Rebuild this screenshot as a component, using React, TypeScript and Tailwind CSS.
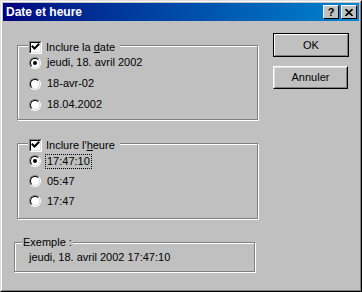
import React from 'react';

const raised =
  'border border-t-white border-l-white border-b-black border-r-black';

function Radio({ checked }: { checked?: boolean }) {
  return (
    <span className="w-[12px] h-[12px] shrink-0 rounded-full border border-t-[#808080] border-l-[#808080] border-b-white border-r-white">
      <span className="flex items-center justify-center w-full h-full rounded-full bg-white border border-t-black border-l-black border-b-[#dfdfdf] border-r-[#dfdfdf]">
        {checked && <span className="w-[4px] h-[4px] rounded-full bg-black" />}
      </span>
    </span>
  );
}

function Checkbox() {
  return (
    <span className="w-[13px] h-[13px] shrink-0 border border-t-[#808080] border-l-[#808080] border-b-white border-r-white">
      <span className="flex w-full h-full bg-white border border-t-black border-l-black border-b-[#dfdfdf] border-r-[#dfdfdf]">
        <svg width="9" height="9" viewBox="0 0 9 9">
          <polyline points="1.5,3.5 3.5,5.5 7.5,1.5" fill="none" stroke="black" strokeWidth="2" strokeLinecap="square" />
        </svg>
      </span>
    </span>
  );
}

function Row({ label, checked, focus, h }: { label: string; checked?: boolean; focus?: boolean; h: string }) {
  return (
    <div className={`flex items-center pl-[11px] ${h}`}>
      <Radio checked={checked} />
      <span className={`ml-[5px] px-[1px] leading-[13px] ${focus ? 'outline outline-1 outline-dotted outline-black' : ''}`}>
        {label}
      </span>
    </div>
  );
}

export default function App() {
  return (
    <div className="w-[362px] h-[292px] bg-[#c0c0c0] border border-t-[#dfdfdf] border-l-[#dfdfdf] border-b-black border-r-black font-['Liberation_Sans',Arial,sans-serif] text-[11px] text-black">
      <div className="w-full h-full p-[1px] border border-t-white border-l-white border-b-[#808080] border-r-[#808080] flex flex-col">
        {/* barre de titre */}
        <div className="h-[18px] shrink-0 flex items-center justify-between pl-[3px] pr-[2px] bg-gradient-to-r from-[#000080] to-[#1084d0]">
          <span className="text-white font-bold text-[12px] leading-none">Date et heure</span>
          <div className="flex gap-[2px]">
            <div className={`w-[16px] h-[14px] bg-[#c0c0c0] ${raised} flex items-center justify-center`}>
              <span className="font-bold text-[11px] leading-none">?</span>
            </div>
            <div className={`w-[16px] h-[14px] bg-[#c0c0c0] ${raised} flex items-center justify-center`}>
              <svg width="8" height="7" viewBox="0 0 8 7">
                <path d="M0.5 0 L7.5 7 M7.5 0 L0.5 7" stroke="black" strokeWidth="1.6" />
              </svg>
            </div>
          </div>
        </div>

        <div className="flex flex-1">
          {/* colonne gauche */}
          <div className="pl-[14px] pt-[24px] flex flex-col">
            <div className="w-[241px] border border-[#808080] shadow-[1px_1px_0_#fff,inset_1px_1px_0_#fff] pb-[4px]">
              <div className="-mt-[5px] ml-[10px] h-[13px] w-fit flex items-center bg-[#c0c0c0] pl-[1px] pr-[5px]">
                <Checkbox />
                <span className="ml-[4px] leading-[13px]">
                  Inclure la <span className="underline underline-offset-1">d</span>ate
                </span>
              </div>
              <div className="-mt-[2px]">
                <Row label="jeudi, 18. avril 2002" checked h="h-[21px]" />
                <Row label="18-avr-02" h="h-[21px]" />
                <Row label="18.04.2002" h="h-[21px]" />
              </div>
            </div>

            <div className="mt-[23px] w-[241px] border border-[#808080] shadow-[1px_1px_0_#fff,inset_1px_1px_0_#fff] pb-[7px]">
              <div className="-mt-[5px] ml-[10px] h-[13px] w-fit flex items-center bg-[#c0c0c0] pl-[1px] pr-[5px]">
                <Checkbox />
                <span className="ml-[4px] leading-[13px]">
                  Inclure l'<span className="underline underline-offset-1">h</span>eure
                </span>
              </div>
              <div className="-mt-[1px]">
                <Row label="17:47:10" checked focus h="h-[20px]" />
                <Row label="05:47" h="h-[20px]" />
                <Row label="17:47" h="h-[20px]" />
              </div>
            </div>

            <div className="mt-[23px] -ml-[3px] w-[241px] h-[30px] border border-[#808080] shadow-[1px_1px_0_#fff,inset_1px_1px_0_#fff]">
              <div className="-mt-[7px] ml-[7px] w-fit bg-[#c0c0c0] px-[1px] leading-[13px]">Exemple :</div>
              <div className="ml-[14px] mt-[2px] leading-[13px]">jeudi, 18. avril 2002 17:47:10</div>
            </div>
          </div>

          {/* boutons */}
          <div className="ml-[15px] pt-[12px] flex flex-col">
            <button className="w-[76px] h-[24px] border border-black bg-[#c0c0c0] p-0">
              <span className="flex items-center justify-center w-full h-full border border-t-white border-l-white border-b-[#808080] border-r-[#808080]">
                OK
              </span>
            </button>
            <button className={`mt-[9px] w-[75px] h-[23px] bg-[#c0c0c0] p-0 ${raised}`}>
              <span className="flex items-center justify-center w-full h-full border border-t-[#dfdfdf] border-l-[#dfdfdf] border-b-[#808080] border-r-[#808080]">
                Annuler
              </span>
            </button>
          </div>
        </div>
      </div>
    </div>
  );
}
